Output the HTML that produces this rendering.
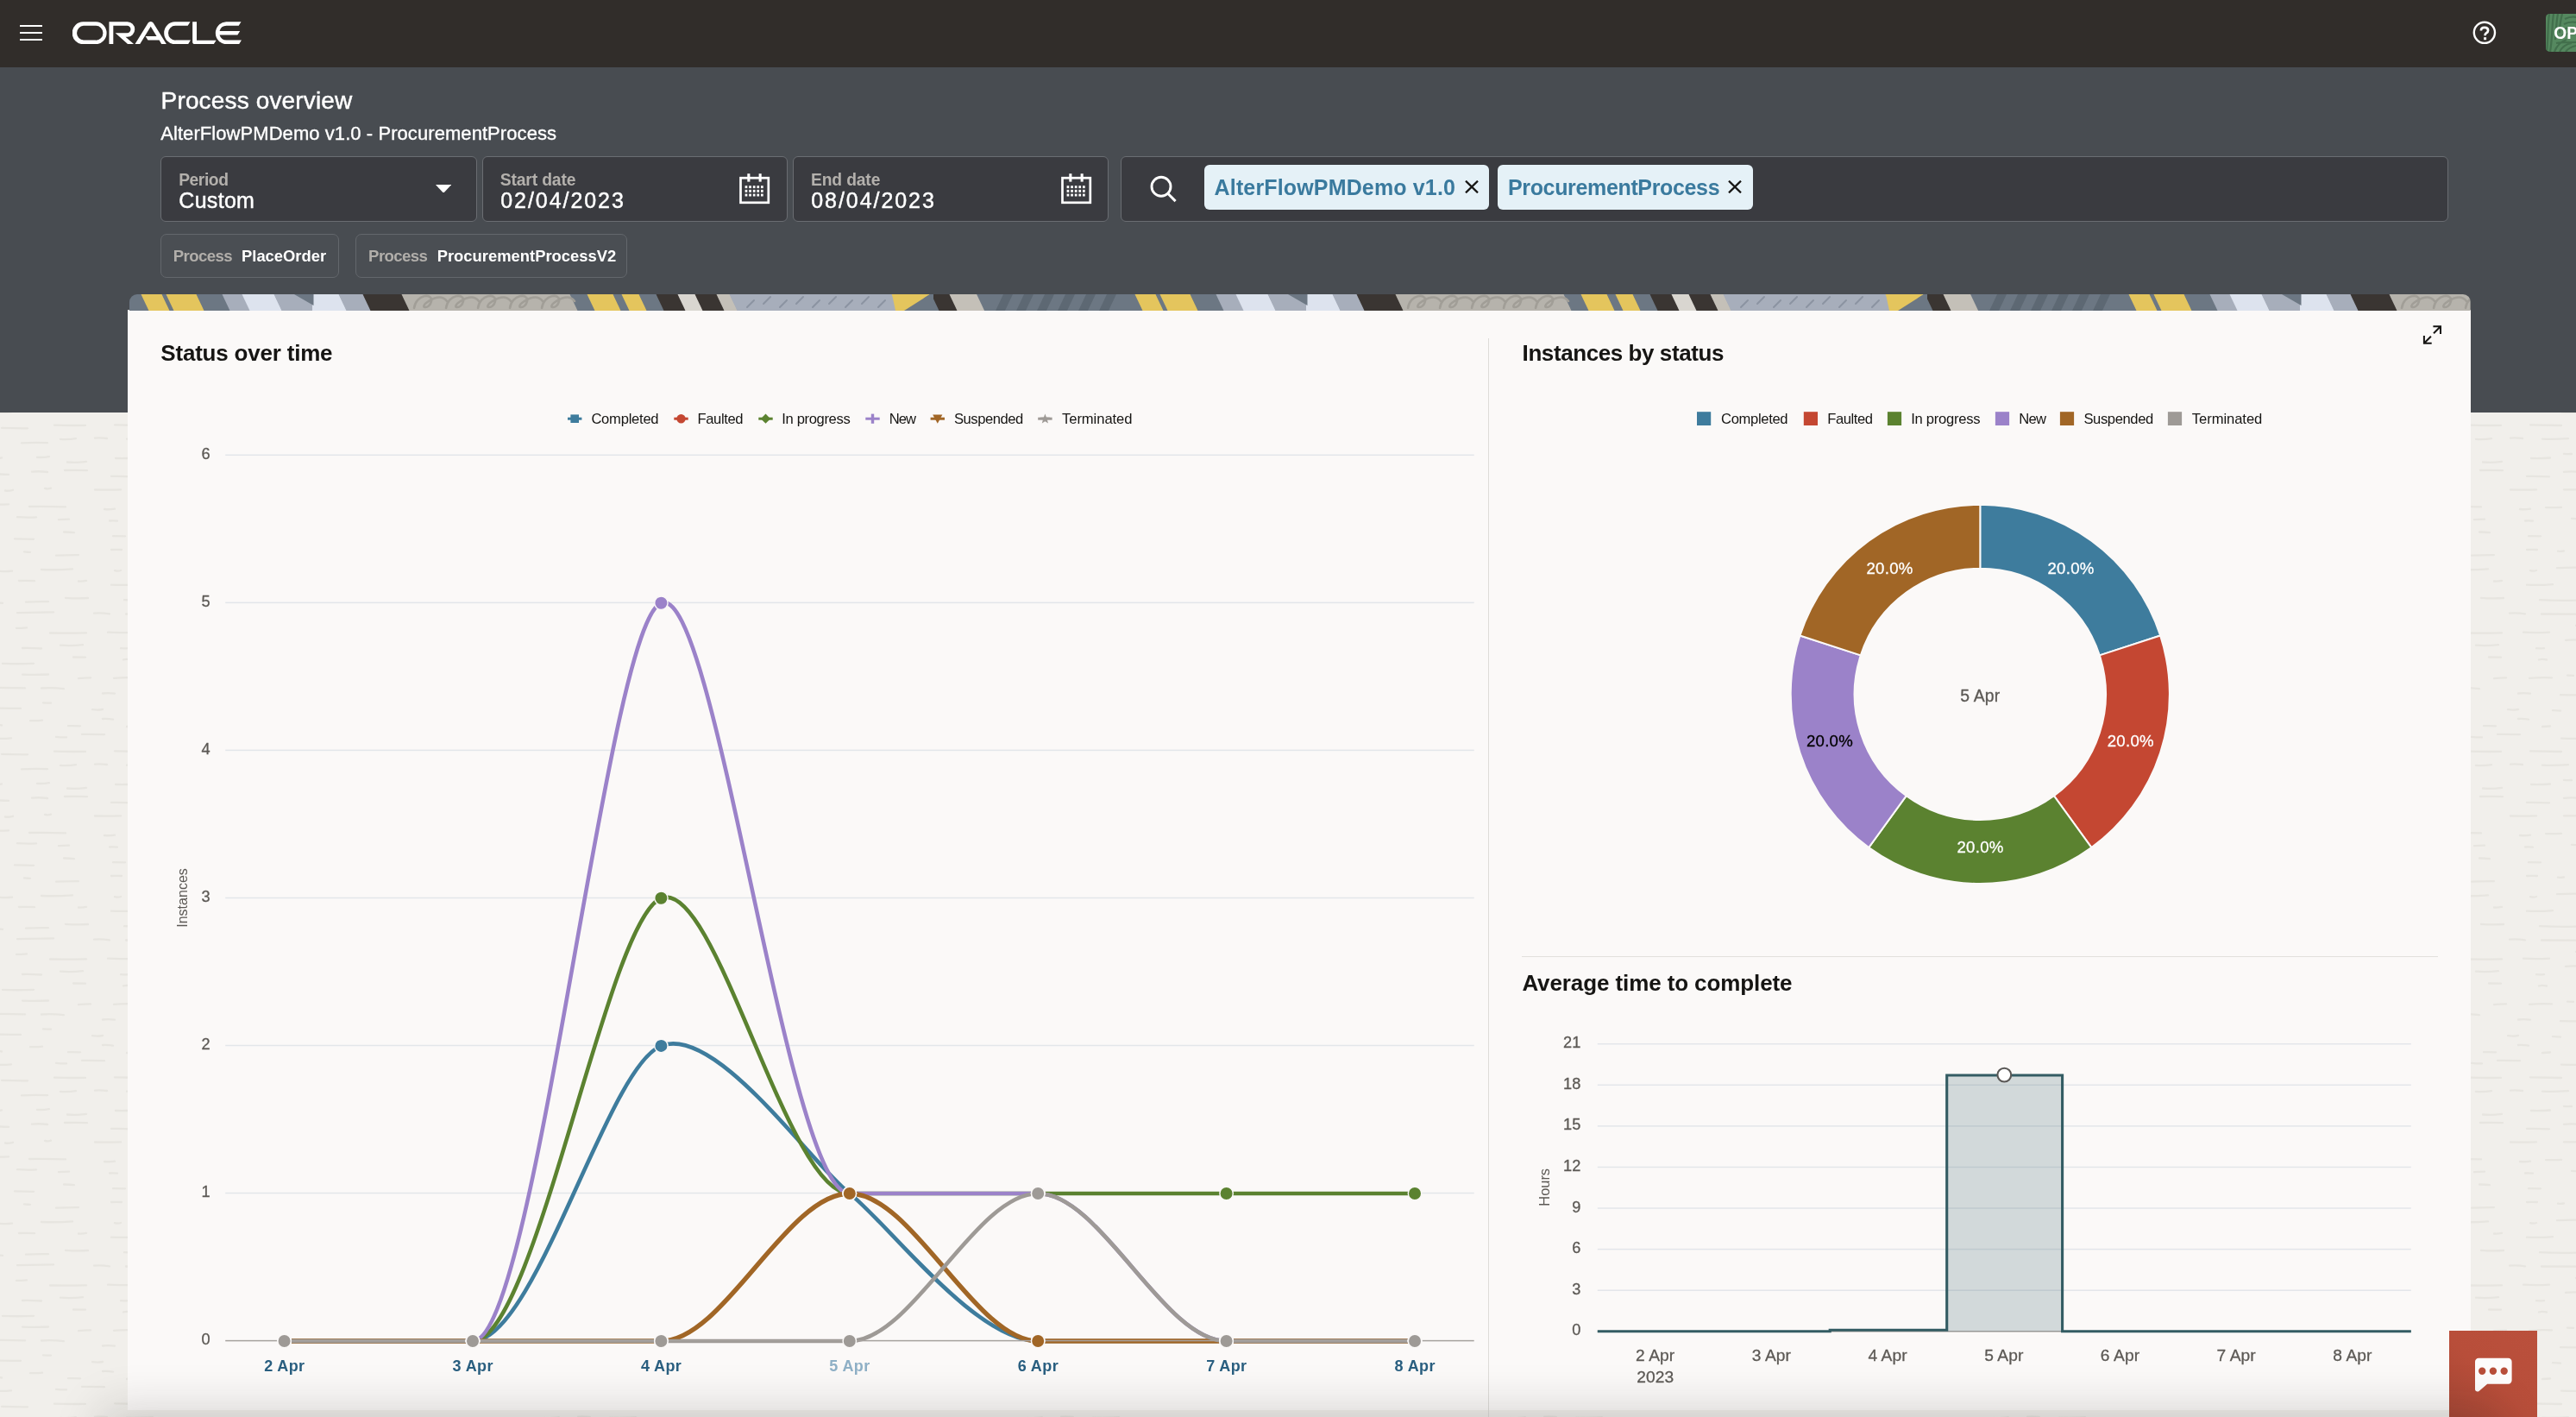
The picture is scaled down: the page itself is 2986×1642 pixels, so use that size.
<!DOCTYPE html><html><head><meta charset="utf-8"><title>Process overview</title><style>html,body{margin:0;padding:0}body{width:2986px;height:1642px;overflow:hidden;position:relative;background:#f1efeb;font-family:"Liberation Sans", sans-serif;}</style></head><body><div style="position:absolute;left:0;top:0;width:2986px;height:1642px;will-change:transform"><svg width="2986" height="1642" style="position:absolute;left:0;top:0"><defs><pattern id="tex" width="560" height="378" patternUnits="userSpaceOnUse"><g stroke="#e7e5e0" stroke-width="2.3" stroke-linecap="round" fill="none"><path d="M3 12.9q18 0.7 36 -0.1"/><path d="M85 5.5q7 0.0 14 0.2"/><path d="M143 8.4q4 -0.9 9 0.1"/><path d="M200 10.0q4 -0.2 7 -0.1"/><path d="M249 10.4q6 0.8 12 -0.7"/><path d="M277 10.1q7 0.7 14 -0.3"/><path d="M327 9.2q7 0.3 14 -0.0"/><path d="M380 10.7q15 -0.2 30 0.1"/><path d="M460 11.3q4 -0.4 9 -0.4"/><path d="M494 9.7q4 -0.9 9 -0.6"/><path d="M528 14.0q4 0.8 9 -0.8"/><path d="M26 25.6q15 0.5 30 -0.1"/><path d="M91 30.1q7 -0.6 14 -0.7"/><path d="M132 29.8q13 -0.9 26 -0.4"/><path d="M176 26.6q4 -0.0 7 0.3"/><path d="M204 23.6q18 0.6 36 -0.6"/><path d="M278 25.8q4 1.2 9 -0.8"/><path d="M334 24.8q21 0.9 42 -0.5"/><path d="M405 28.6q21 -1.0 42 0.8"/><path d="M469 21.6q9 0.3 18 0.5"/><path d="M516 22.5q4 0.2 9 -0.4"/><path d="M-1 40.9q15 0.2 30 0.5"/><path d="M48 41.5q13 -0.8 26 0.7"/><path d="M119 47.5q7 -0.8 14 0.2"/><path d="M168 49.2q13 0.2 26 -0.1"/><path d="M212 45.1q4 -0.6 7 0.4"/><path d="M248 48.6q13 0.2 26 -0.3"/><path d="M294 40.9q4 -0.0 9 0.2"/><path d="M341 42.6q4 1.0 9 -0.5"/><path d="M364 44.0q9 -0.6 18 -0.7"/><path d="M407 45.8q18 -0.9 36 -0.2"/><path d="M491 46.7q11 0.5 22 0.1"/><path d="M532 49.7q4 -0.1 7 -0.2"/><path d="M-18 64.5q21 -0.0 42 0.4"/><path d="M50 58.3q4 0.1 9 0.4"/><path d="M107 66.2q6 1.0 12 -0.2"/><path d="M159 67.1q4 -0.2 9 0.5"/><path d="M215 57.7q21 0.4 42 -0.2"/><path d="M271 58.4q4 0.3 9 0.8"/><path d="M328 61.8q11 0.6 22 0.1"/><path d="M380 58.4q18 0.6 36 -0.8"/><path d="M453 57.7q15 1.1 30 -0.6"/><path d="M527 60.3q15 -1.2 30 -0.3"/><path d="M-10 83.8q6 -0.4 12 0.7"/><path d="M35 79.1q7 0.4 14 -0.5"/><path d="M79 85.2q7 -0.3 14 0.1"/><path d="M119 77.0q6 -0.4 12 0.6"/><path d="M147 86.0q4 -0.5 9 -0.5"/><path d="M187 85.7q9 0.8 18 -0.2"/><path d="M239 83.4q11 0.8 22 0.2"/><path d="M287 78.6q4 0.3 7 0.3"/><path d="M319 78.9q11 0.7 22 -0.8"/><path d="M360 77.6q15 0.6 30 -0.4"/><path d="M434 86.3q4 -0.9 7 -0.6"/><path d="M475 86.0q11 0.4 22 -0.5"/><path d="M529 83.4q6 0.6 12 0.1"/><path d="M-9 99.4q11 1.1 22 0.0"/><path d="M65 97.8q6 0.7 12 0.6"/><path d="M95 94.9q13 -0.1 26 0.2"/><path d="M169 99.6q13 0.4 26 0.0"/><path d="M240 98.6q11 0.4 22 -0.5"/><path d="M304 95.8q4 1.0 9 0.8"/><path d="M364 104.2q18 1.0 36 -0.4"/><path d="M441 97.3q4 -1.0 7 -0.1"/><path d="M483 98.9q9 -1.1 18 0.5"/><path d="M517 95.4q4 -0.4 7 0.5"/><path d="M544 104.5q6 1.0 12 0.0"/><path d="M2 117.9q15 0.5 30 0.4"/><path d="M63 114.7q18 0.5 36 0.2"/><path d="M133 114.3q18 0.4 36 0.7"/><path d="M216 113.8q21 0.8 42 0.7"/><path d="M292 117.0q21 -0.2 42 -0.6"/><path d="M348 111.8q13 1.1 26 0.0"/><path d="M403 112.8q21 -1.0 42 -0.5"/><path d="M494 116.1q15 1.1 30 0.7"/><path d="M25 135.3q15 -0.9 30 -0.1"/><path d="M70 130.9q9 0.7 18 -0.8"/><path d="M110 129.6q7 -0.5 14 0.4"/><path d="M147 130.7q15 0.6 30 -0.6"/><path d="M210 137.4q9 0.5 18 0.6"/><path d="M243 138.6q13 0.3 26 0.1"/><path d="M316 136.5q18 0.1 36 0.6"/><path d="M389 132.1q6 0.6 12 0.5"/><path d="M449 136.1q11 0.9 22 -0.5"/><path d="M515 139.3q7 -0.9 14 -0.4"/><path d="M-7 152.3q4 1.1 9 0.1"/><path d="M43 151.9q7 0.4 14 -0.8"/><path d="M78 157.5q11 1.1 22 -0.6"/><path d="M134 153.0q11 0.4 22 -0.5"/><path d="M172 147.8q4 0.6 9 0.2"/><path d="M230 149.1q15 -0.8 30 -0.5"/><path d="M306 157.7q9 -1.0 18 -0.7"/><path d="M374 148.4q15 -1.0 30 -0.2"/><path d="M434 152.2q11 0.2 22 -0.8"/><path d="M497 149.5q7 -0.1 14 0.4"/><path d="M540 154.2q7 -1.0 14 0.5"/><path d="M-16 171.8q13 -0.7 26 0.1"/><path d="M37 168.6q9 -0.9 18 0.4"/><path d="M75 167.0q13 -0.4 26 0.1"/><path d="M129 173.9q13 -0.2 26 0.4"/><path d="M172 168.8q11 -1.0 22 0.6"/><path d="M246 166.0q21 -0.5 42 0.7"/><path d="M313 172.8q7 0.2 14 0.1"/><path d="M356 172.6q15 0.5 30 0.4"/><path d="M437 166.8q4 -0.9 7 -0.4"/><path d="M475 166.1q18 -0.7 36 -0.2"/><path d="M529 168.5q9 -0.4 18 0.1"/><path d="M6 190.5q4 0.7 9 -0.7"/><path d="M52 187.8q4 1.1 7 -0.2"/><path d="M110 189.5q15 0.2 30 -0.1"/><path d="M172 189.3q9 0.2 18 -0.2"/><path d="M215 189.7q9 -0.5 18 0.3"/><path d="M259 192.0q4 0.2 7 0.2"/><path d="M295 184.1q13 -0.4 26 -0.2"/><path d="M357 184.3q11 1.0 22 -0.1"/><path d="M411 184.0q7 -1.0 14 0.5"/><path d="M474 194.3q6 0.8 12 0.2"/><path d="M504 188.1q21 -0.9 42 0.6"/><path d="M-12 206.4q11 0.4 22 -0.1"/><path d="M34 209.0q21 -0.3 42 0.4"/><path d="M121 212.0q6 0.6 12 -0.4"/><path d="M151 210.1q9 0.3 18 -0.2"/><path d="M193 209.2q21 -0.7 42 -0.4"/><path d="M258 207.0q7 0.4 14 -0.5"/><path d="M312 201.6q4 -0.6 7 -0.8"/><path d="M335 207.5q7 -1.0 14 -0.7"/><path d="M389 204.1q18 1.2 36 -0.0"/><path d="M452 205.3q11 0.6 22 0.5"/><path d="M491 206.4q4 0.8 9 0.5"/><path d="M20 221.2q11 0.8 22 0.2"/><path d="M68 224.2q6 -0.3 12 -0.6"/><path d="M127 225.5q4 -0.2 9 0.1"/><path d="M181 222.8q15 0.7 30 -0.7"/><path d="M233 220.4q21 -0.5 42 0.4"/><path d="M315 229.2q9 -0.7 18 0.3"/><path d="M360 223.0q4 -0.1 9 0.2"/><path d="M417 224.3q9 0.7 18 -0.3"/><path d="M461 230.1q13 0.6 26 0.0"/><path d="M504 219.8q11 0.4 22 0.1"/><path d="M17 246.3q11 0.1 22 0.5"/><path d="M74 238.5q6 -0.1 12 0.6"/><path d="M131 243.2q7 0.1 14 0.1"/><path d="M196 238.2q13 0.1 26 0.5"/><path d="M239 240.5q4 -0.9 9 -0.3"/><path d="M263 238.6q6 0.8 12 -0.1"/><path d="M316 245.9q15 0.1 30 0.4"/><path d="M375 246.4q11 -0.4 22 -0.6"/><path d="M430 245.3q4 1.0 9 -0.1"/><path d="M484 246.9q11 0.7 22 0.5"/><path d="M28 261.3q4 0.5 7 0.5"/><path d="M65 265.6q13 -0.6 26 -0.5"/><path d="M129 259.0q6 -0.3 12 0.0"/><path d="M165 260.7q4 0.6 7 -0.3"/><path d="M192 265.5q6 0.6 12 -0.8"/><path d="M237 258.9q4 -0.7 7 -0.2"/><path d="M280 263.4q21 0.2 42 -0.4"/><path d="M343 259.9q9 1.0 18 0.7"/><path d="M399 260.8q18 -0.6 36 0.6"/><path d="M484 262.8q11 0.7 22 -0.7"/><path d="M-0 283.9q7 0.7 14 -0.2"/><path d="M48 282.0q18 0.7 36 -0.7"/><path d="M133 283.1q4 1.0 7 -0.1"/><path d="M164 280.2q13 -0.8 26 -0.5"/><path d="M216 283.5q9 0.7 18 -0.6"/><path d="M276 276.4q21 0.1 42 -0.6"/><path d="M361 275.7q4 1.0 7 -0.6"/><path d="M387 276.5q11 0.5 22 -0.6"/><path d="M441 274.4q15 0.6 30 0.1"/><path d="M505 282.2q4 -0.2 7 0.7"/><path d="M529 275.8q15 0.1 30 0.0"/><path d="M22 295.0q9 -0.2 18 0.1"/><path d="M91 295.5q4 0.4 9 -0.6"/><path d="M129 299.7q15 0.7 30 -0.6"/><path d="M190 299.3q13 -0.1 26 -0.3"/><path d="M235 300.9q4 0.8 7 0.4"/><path d="M290 294.7q6 -0.3 12 0.1"/><path d="M327 299.8q11 0.1 22 -0.7"/><path d="M370 299.5q13 -0.4 26 0.7"/><path d="M432 296.4q11 -0.3 22 -0.6"/><path d="M491 299.0q6 0.5 12 -0.5"/><path d="M-9 320.4q6 -0.2 12 0.4"/><path d="M30 319.7q13 -0.9 26 -0.5"/><path d="M76 314.8q13 1.0 26 0.2"/><path d="M144 317.2q21 1.2 42 0.5"/><path d="M225 315.3q21 -0.6 42 -0.5"/><path d="M292 310.7q15 -0.3 30 0.0"/><path d="M366 316.2q4 -0.8 9 0.4"/><path d="M424 312.1q18 0.3 36 0.0"/><path d="M495 320.4q7 0.0 14 0.3"/><path d="M-10 334.4q4 -0.7 7 -0.7"/><path d="M20 332.1q21 -0.4 42 -0.7"/><path d="M109 332.6q9 -0.9 18 0.8"/><path d="M146 333.5q21 0.1 42 0.1"/><path d="M213 334.1q11 -0.9 22 0.5"/><path d="M259 330.1q11 0.2 22 0.5"/><path d="M303 336.4q18 -0.1 36 -0.2"/><path d="M382 330.9q6 0.4 12 0.4"/><path d="M423 334.5q21 0.6 42 -0.5"/><path d="M494 329.1q4 -0.3 7 0.1"/><path d="M522 328.9q18 -0.6 36 0.7"/><path d="M19 349.9q6 -0.0 12 -0.6"/><path d="M58 355.5q21 0.2 42 -0.1"/><path d="M125 354.7q15 0.9 30 -0.1"/><path d="M186 346.8q21 1.1 42 -0.3"/><path d="M261 355.4q13 -0.4 26 -0.7"/><path d="M329 353.6q13 0.2 26 0.4"/><path d="M380 355.1q21 -0.6 42 0.6"/><path d="M446 356.2q13 -0.1 26 -0.6"/><path d="M520 348.9q18 -0.3 36 -0.4"/><path d="M26 373.0q11 -0.2 22 0.5"/><path d="M70 369.7q13 1.0 26 -0.6"/><path d="M140 373.2q4 0.2 9 -0.1"/><path d="M174 363.8q9 -0.8 18 -0.1"/><path d="M223 367.9q18 -0.3 36 0.1"/><path d="M275 368.5q4 -0.4 7 -0.3"/><path d="M302 373.2q15 -0.7 30 0.6"/><path d="M372 365.7q4 0.8 7 -0.2"/><path d="M411 370.5q6 0.5 12 0.1"/><path d="M457 365.6q7 0.9 14 -0.7"/><path d="M489 374.1q11 -0.5 22 -0.1"/></g></pattern></defs><rect x="0" y="478" width="2986" height="1164" fill="url(#tex)"/></svg>
<div style="position:absolute;left:0px;top:0px;width:2986px;height:77.6px;background:#312d2a;"></div>
<div style="position:absolute;left:0px;top:77.6px;width:2986px;height:400.4px;background:#484c51;"></div>
<div style="position:absolute;left:22.7px;top:28.95px;width:26.6px;height:2.5px;background:#fff;"></div>
<div style="position:absolute;left:22.7px;top:36.75px;width:26.6px;height:2.5px;background:#fff;"></div>
<div style="position:absolute;left:22.7px;top:44.75px;width:26.6px;height:2.5px;background:#fff;"></div>
<svg viewBox="0 0 231 30" preserveAspectRatio="none" style="position:absolute;left:83.9px;top:24.8px;width:196.2px;height:26.2px"><path fill="#fff" d="M99.61,19.52h15.24l-8.05-13L92,30H85.27l18-28.17a4.29,4.29,0,0,1,7-.05L128.32,30h-6.73l-3.17-5.25H103l-3.36-5.23m69.93,5.23V0.28h-5.72V27.16a2.76,2.76,0,0,0,.85,2,2.89,2.89,0,0,0,2.08.87h26l3.39-5.25H169.54M75,20.38A10,10,0,0,0,75,.28H50V30h5.71V5.54H74.65a4.81,4.81,0,0,1,0,9.62H58.54L75.6,30h8.29L72.43,20.38H75M14.88,30H32.15a14.86,14.86,0,0,0,0-29.71H14.88a14.86,14.86,0,1,0,0,29.71m16.88-5.23H15.26a9.62,9.62,0,0,1,0-19.23h16.5a9.62,9.62,0,1,1,0,19.23M140.25,30h17.63l3.34-5.23H140.64a9.62,9.62,0,1,1,0-19.23h16.75l3.38-5.25H140.25a14.86,14.86,0,1,0,0,29.71m69.87-5.23a9.62,9.62,0,0,1-9.26-7h24.42l3.36-5.24H200.86a9.61,9.61,0,0,1,9.26-7h16.76l3.35-5.25h-20.5a14.86,14.86,0,0,0,0,29.71h17.63l3.35-5.23h-20.6"/></svg>
<svg style="position:absolute;left:2864px;top:22px;width:32px;height:32px" viewBox="0 0 32 32"><circle cx="15.9" cy="15.8" r="12.1" fill="none" stroke="#fff" stroke-width="2.4"/><path d="M11.9 13.6c0-2.4 1.8-3.7 4.1-3.7 2.4 0 4.1 1.3 4.1 3.3 0 1.6-.9 2.4-2.1 3.2-1 .7-1.4 1.2-1.4 2.3v.6" fill="none" stroke="#fff" stroke-width="2.7"/><rect x="15.1" y="21.2" width="3" height="3" fill="#fff"/></svg>
<svg style="position:absolute;left:2951px;top:15.9px;width:35px;height:44px" viewBox="0 0 35 44"><defs><clipPath id="opc"><rect x="0" y="0" width="60" height="43.9" rx="4.5"/></clipPath></defs><g clip-path="url(#opc)"><rect width="60" height="44" fill="#55885f"/><g stroke="#426f4c" stroke-width="2.2" fill="none"><path d="M4 0C2 14 3 30 1 44M9 0C7 12 8 26 5 44M14 0C12 10 12 20 11 30M19 0c-2 8-3 14-3 22"/><path d="M22 6c6-3 10-3 14-2M21 12c6-3 10-3 14-2M21 18c6-3 10-3 14-2M19 25c6-3 12-3 16-2"/><path d="M10 44c3-8 8-12 14-14M16 44c3-6 8-9 14-10M23 44c3-4 7-6 12-7M12 34c4-1 8-1 23-1"/></g></g><text transform="translate(9.3 28.6) scale(0.944 1)" font-size="20.4" font-weight="700" fill="#fff">OP</text></svg>
<div style="position:absolute;left:186.6px;top:103.20px;font-size:28px;line-height:28px;font-weight:400;color:#fff;letter-spacing:0.15px;white-space:nowrap;-webkit-text-stroke:0.45px #fff;">Process overview</div>
<div style="position:absolute;left:186.2px;top:144.18px;font-size:22px;line-height:22px;font-weight:400;color:#fff;letter-spacing:0.07px;white-space:nowrap;-webkit-text-stroke:0.35px #fff;">AlterFlowPMDemo v1.0 - ProcurementProcess</div>
<div style="position:absolute;left:186.2px;top:181.3px;width:366.6px;height:75.9px;box-sizing:border-box;background:#3a3b40;border:1.2px solid #6a6d72;border-radius:6px;"></div>
<div style="position:absolute;left:559.1px;top:181.3px;width:353.6px;height:75.9px;box-sizing:border-box;background:#3a3b40;border:1.2px solid #6a6d72;border-radius:6px;"></div>
<div style="position:absolute;left:918.8px;top:181.3px;width:366.4px;height:75.9px;box-sizing:border-box;background:#3a3b40;border:1.2px solid #6a6d72;border-radius:6px;"></div>
<div style="position:absolute;left:1299.3px;top:181.3px;width:1539.2px;height:75.9px;box-sizing:border-box;background:#3a3b40;border:1.2px solid #6a6d72;border-radius:6px;"></div>
<div style="position:absolute;left:207.2px;top:199.26px;font-size:19.3px;line-height:19.3px;font-weight:700;color:#b3b0ac;letter-spacing:-0.45px;white-space:nowrap;">Period</div>
<div style="position:absolute;left:207.3px;top:220.44px;font-size:25px;line-height:25px;font-weight:400;color:#fff;letter-spacing:0.3px;white-space:nowrap;-webkit-text-stroke:0.45px #fff;">Custom</div>
<div style="position:absolute;left:579.8px;top:199.26px;font-size:19.3px;line-height:19.3px;font-weight:700;color:#b3b0ac;letter-spacing:-0.15px;white-space:nowrap;">Start date</div>
<div style="position:absolute;left:580.2px;top:220.34px;font-size:25px;line-height:25px;font-weight:400;color:#fff;letter-spacing:1.95px;white-space:nowrap;-webkit-text-stroke:0.45px #fff;">02/04/2023</div>
<div style="position:absolute;left:940.0px;top:199.26px;font-size:19.3px;line-height:19.3px;font-weight:700;color:#b3b0ac;letter-spacing:-0.15px;white-space:nowrap;">End date</div>
<div style="position:absolute;left:940.2px;top:220.34px;font-size:25px;line-height:25px;font-weight:400;color:#fff;letter-spacing:1.95px;white-space:nowrap;-webkit-text-stroke:0.45px #fff;">08/04/2023</div>
<svg style="position:absolute;left:505.3px;top:213.6px;width:18.2px;height:9.8px" viewBox="0 0 18.2 9.8"><path d="M0 0h18.2L9.1 9.8z" fill="#fff"/></svg>
<svg style="position:absolute;left:856.8px;top:200.8px;width:36px;height:36px" viewBox="0 0 36 36"><rect x="1.5" y="5.2" width="32.3" height="28.6" fill="none" stroke="#fff" stroke-width="2.7"/><rect x="9.3" y="0.2" width="3.1" height="9.4" fill="#fff"/><rect x="22.6" y="0.2" width="3.1" height="9.4" fill="#fff"/><g fill="#fff"><rect x="6.6" y="14.2" width="2.7" height="2.9"/><rect x="11.2" y="14.2" width="2.7" height="2.9"/><rect x="15.8" y="14.2" width="2.7" height="2.9"/><rect x="20.4" y="14.2" width="2.7" height="2.9"/><rect x="25.0" y="14.2" width="2.7" height="2.9"/><rect x="6.6" y="18.9" width="2.7" height="2.9"/><rect x="11.2" y="18.9" width="2.7" height="2.9"/><rect x="15.8" y="18.9" width="2.7" height="2.9"/><rect x="20.4" y="18.9" width="2.7" height="2.9"/><rect x="25.0" y="18.9" width="2.7" height="2.9"/><rect x="6.6" y="23.6" width="2.7" height="2.9"/><rect x="11.2" y="23.6" width="2.7" height="2.9"/><rect x="15.8" y="23.6" width="2.7" height="2.9"/><rect x="20.4" y="23.6" width="2.7" height="2.9"/><rect x="25.0" y="23.6" width="2.7" height="2.9"/></g></svg>
<svg style="position:absolute;left:1229.8px;top:200.8px;width:36px;height:36px" viewBox="0 0 36 36"><rect x="1.5" y="5.2" width="32.3" height="28.6" fill="none" stroke="#fff" stroke-width="2.7"/><rect x="9.3" y="0.2" width="3.1" height="9.4" fill="#fff"/><rect x="22.6" y="0.2" width="3.1" height="9.4" fill="#fff"/><g fill="#fff"><rect x="6.6" y="14.2" width="2.7" height="2.9"/><rect x="11.2" y="14.2" width="2.7" height="2.9"/><rect x="15.8" y="14.2" width="2.7" height="2.9"/><rect x="20.4" y="14.2" width="2.7" height="2.9"/><rect x="25.0" y="14.2" width="2.7" height="2.9"/><rect x="6.6" y="18.9" width="2.7" height="2.9"/><rect x="11.2" y="18.9" width="2.7" height="2.9"/><rect x="15.8" y="18.9" width="2.7" height="2.9"/><rect x="20.4" y="18.9" width="2.7" height="2.9"/><rect x="25.0" y="18.9" width="2.7" height="2.9"/><rect x="6.6" y="23.6" width="2.7" height="2.9"/><rect x="11.2" y="23.6" width="2.7" height="2.9"/><rect x="15.8" y="23.6" width="2.7" height="2.9"/><rect x="20.4" y="23.6" width="2.7" height="2.9"/><rect x="25.0" y="23.6" width="2.7" height="2.9"/></g></svg>
<svg style="position:absolute;left:1330px;top:200px;width:36px;height:36px" viewBox="0 0 36 36"><circle cx="16" cy="16.3" r="11" fill="none" stroke="#fff" stroke-width="2.9"/><path d="M24 24.5l8.6 8.6" stroke="#fff" stroke-width="3" fill="none"/></svg>
<div style="position:absolute;left:1396.2px;top:191.2px;width:329.6px;height:51.7px;background:#e5f1f7;border-radius:6px;"></div>
<div style="position:absolute;left:1407.6px;top:205.44px;font-size:25px;line-height:25px;font-weight:700;color:#3a7a9e;letter-spacing:0.15px;white-space:nowrap;">AlterFlowPMDemo v1.0</div>
<svg style="position:absolute;left:1697.8px;top:209.3px;width:16px;height:15px" viewBox="0 0 16 15"><path d="M1 0.6l14 13.8M15 0.6L1 14.4" stroke="#161513" stroke-width="2.2" fill="none"/></svg>
<div style="position:absolute;left:1736.1px;top:191.2px;width:296.0px;height:51.7px;background:#e5f1f7;border-radius:6px;"></div>
<div style="position:absolute;left:1748.0px;top:205.44px;font-size:25px;line-height:25px;font-weight:700;color:#3a7a9e;letter-spacing:-0.35px;white-space:nowrap;">ProcurementProcess</div>
<svg style="position:absolute;left:2003.2px;top:209.3px;width:16px;height:15px" viewBox="0 0 16 15"><path d="M1 0.6l14 13.8M15 0.6L1 14.4" stroke="#161513" stroke-width="2.2" fill="none"/></svg>
<div style="position:absolute;left:186.2px;top:271.1px;width:206.6px;height:50.9px;box-sizing:border-box;border:1.2px solid #63676c;border-radius:7px;background:#4a4e53;"></div>
<div style="position:absolute;left:200.79999999999998px;top:288.26px;font-size:18.6px;line-height:18.6px;font-weight:700;color:#b1aeaa;letter-spacing:-0.6px;white-space:nowrap;">Process</div>
<div style="position:absolute;left:280.0px;top:288.42px;font-size:18.4px;line-height:18.4px;font-weight:700;color:#fff;letter-spacing:0.0px;white-space:nowrap;">PlaceOrder</div>
<div style="position:absolute;left:412.3px;top:271.1px;width:315.0px;height:50.9px;box-sizing:border-box;border:1.2px solid #63676c;border-radius:7px;background:#4a4e53;"></div>
<div style="position:absolute;left:427.09999999999997px;top:288.26px;font-size:18.6px;line-height:18.6px;font-weight:700;color:#b1aeaa;letter-spacing:-0.6px;white-space:nowrap;">Process</div>
<div style="position:absolute;left:506.7px;top:288.42px;font-size:18.4px;line-height:18.4px;font-weight:700;color:#fff;letter-spacing:0.0px;white-space:nowrap;">ProcurementProcessV2</div>
<div style="position:absolute;left:148.0px;top:359.4px;width:2716.0px;height:1274.6px;background:#fbf9f8;"></div>
<svg width="2713.6" height="18.6" style="position:absolute;left:150.4px;top:341px;border-radius:9px 9px 0 0;overflow:hidden"><defs><pattern id="strip" width="1152" height="19" patternUnits="userSpaceOnUse"><rect x="0" y="0" width="1152" height="19" fill="#6c7783"/><path d="M13.5 0H38.1L47.1 19H22.5z" fill="#e4c55d"/><path d="M37.5 0H43.1L52.1 19H46.5z" fill="#6c7783"/><path d="M42.5 0H78.1L87.1 19H51.5z" fill="#e4c55d"/><path d="M77.5 0H108.1L117.1 19H86.5z" fill="#6c7783"/><path d="M107.5 0H131.1L140.1 19H116.5z" fill="#a7aebb"/><path d="M130.5 0H168.1L177.1 19H139.5z" fill="#dde3ee"/><path d="M167.5 0H210.1L219.1 19H176.5z" fill="#a7aebb"/><path d="M209.5 0H243.1L252.1 19H218.5z" fill="#dde3ee"/><path d="M242.5 0H271.1L280.1 19H251.5z" fill="#a7aebb"/><path d="M270.5 0H316.1L325.1 19H279.5z" fill="#3a3532"/><path d="M315.5 0H511.1L520.1 19H324.5z" fill="#b6b3ac"/><path d="M510.5 0H531.1L540.1 19H519.5z" fill="#6c7783"/><path d="M530.5 0H561.1L570.1 19H539.5z" fill="#e4c55d"/><path d="M560.5 0H571.1L580.1 19H569.5z" fill="#6c7783"/><path d="M570.5 0H591.1L600.1 19H579.5z" fill="#e4c55d"/><path d="M590.5 0H611.1L620.1 19H599.5z" fill="#6c7783"/><path d="M610.5 0H636.1L645.1 19H619.5z" fill="#3a3532"/><path d="M635.5 0H656.1L665.1 19H644.5z" fill="#d9d6d0"/><path d="M655.5 0H681.1L690.1 19H664.5z" fill="#3a3532"/><path d="M680.5 0H696.1L705.1 19H689.5z" fill="#c4c0b8"/><path d="M695.5 0H884.1L893.1 19H704.5z" fill="#a7aebb"/><path d="M883.5 0H919.1L928.1 19H892.5z" fill="#e4c55d"/><path d="M918.5 0H930.1L939.1 19H927.5z" fill="#6c7783"/><path d="M929.5 0H951.1L960.1 19H938.5z" fill="#3a3532"/><path d="M950.5 0H982.1L991.1 19H959.5z" fill="#c4c0b8"/><rect x="212" y="0" width="9" height="19" fill="#dde3ee"/><path d="M191 0h22.5v13z" fill="#6c7783"/><path d="M884 0h44l-30 19h-10z" fill="#e4c55d"/><path d="M928 0l-30 19h34V0z" fill="#6c7783"/><path d="M330 16c2-16 22-18 20-8s-14 8-6 2s18-10 24-2M367 16c2-16 22-18 20-8s-14 8-6 2s18-10 24-2M404 16c2-16 22-18 20-8s-14 8-6 2s18-10 24-2M441 16c2-16 22-18 20-8s-14 8-6 2s18-10 24-2M478 16c2-16 22-18 20-8s-14 8-6 2s18-10 24-2" stroke="#a19e97" stroke-width="2.6" fill="none" stroke-linecap="round"/><path d="M716 15l8 -8M735 11l8 -8M754 15l8 -8M773 11l8 -8M792 15l8 -8M811 11l8 -8M830 15l8 -8M849 11l8 -8M868 15l8 -8" stroke="#8b93a1" stroke-width="2" fill="none" stroke-linecap="round"/><path d="M1004 19l9 -19h11l-9 19zM1028 19l9 -19h11l-9 19zM1052 19l9 -19h11l-9 19zM1076 19l9 -19h11l-9 19zM1100 19l9 -19h11l-9 19zM1124 19l9 -19h11l-9 19z" fill="#5d6873"/></pattern></defs><rect width="2713.6" height="19" fill="url(#strip)"/></svg>
<div style="position:absolute;left:186.3px;top:395.99px;font-size:26px;line-height:26px;font-weight:700;color:#161513;letter-spacing:-0.2px;white-space:nowrap;">Status over time</div>
<div style="position:absolute;left:1764.6px;top:395.99px;font-size:26px;line-height:26px;font-weight:700;color:#161513;letter-spacing:-0.42px;white-space:nowrap;">Instances by status</div>
<div style="position:absolute;left:1764.4px;top:1125.79px;font-size:26px;line-height:26px;font-weight:700;color:#161513;letter-spacing:-0.1px;white-space:nowrap;">Average time to complete</div>
<div style="position:absolute;left:1724.8px;top:392px;width:1.5px;height:1250px;background:#dedcd9;"></div>
<div style="position:absolute;left:1764.3px;top:1107.5px;width:1061.6px;height:1.5px;background:#e2e0dd;"></div>
<svg style="position:absolute;left:2806px;top:374px;width:28px;height:28px" viewBox="0 0 28 28"><g stroke="#161513" stroke-width="2" fill="none"><path d="M14.4 4.3H23V12.9M23 4.3L15 12.3"/><path d="M3.9 15V23.8H12.7M3.9 23.8L11.9 15.8"/></g></svg>
<svg width="2986" height="1642" style="position:absolute;left:0;top:0;font-family:'Liberation Sans', sans-serif"><rect x="261.2" y="1381.80" width="1447.5" height="1.5" fill="#e3e6ea"/><rect x="261.2" y="1210.75" width="1447.5" height="1.5" fill="#e3e6ea"/><rect x="261.2" y="1039.70" width="1447.5" height="1.5" fill="#e3e6ea"/><rect x="261.2" y="868.65" width="1447.5" height="1.5" fill="#e3e6ea"/><rect x="261.2" y="697.60" width="1447.5" height="1.5" fill="#e3e6ea"/><rect x="261.2" y="526.55" width="1447.5" height="1.5" fill="#e3e6ea"/><text x="243.7" y="1558.3" font-size="18.2" font-weight="400" fill="#5c5955" stroke="#5c5955" stroke-width="0.3" letter-spacing="0" text-anchor="end" >0</text><text x="243.7" y="1387.25" font-size="18.2" font-weight="400" fill="#5c5955" stroke="#5c5955" stroke-width="0.3" letter-spacing="0" text-anchor="end" >1</text><text x="243.7" y="1216.2" font-size="18.2" font-weight="400" fill="#5c5955" stroke="#5c5955" stroke-width="0.3" letter-spacing="0" text-anchor="end" >2</text><text x="243.7" y="1045.1499999999999" font-size="18.2" font-weight="400" fill="#5c5955" stroke="#5c5955" stroke-width="0.3" letter-spacing="0" text-anchor="end" >3</text><text x="243.7" y="874.0999999999999" font-size="18.2" font-weight="400" fill="#5c5955" stroke="#5c5955" stroke-width="0.3" letter-spacing="0" text-anchor="end" >4</text><text x="243.7" y="703.05" font-size="18.2" font-weight="400" fill="#5c5955" stroke="#5c5955" stroke-width="0.3" letter-spacing="0" text-anchor="end" >5</text><text x="243.7" y="531.9999999999998" font-size="18.2" font-weight="400" fill="#5c5955" stroke="#5c5955" stroke-width="0.3" letter-spacing="0" text-anchor="end" >6</text><text transform="translate(217.3 1040.5) rotate(-90)" font-size="16" fill="#5c5955" text-anchor="middle" letter-spacing="0.02">Instances</text><text x="329.8" y="1588.5" font-size="18" font-weight="700" fill="#2a5f80"  letter-spacing="0.4" text-anchor="middle" >2 Apr</text><text x="548.2" y="1588.5" font-size="18" font-weight="700" fill="#2a5f80"  letter-spacing="0.4" text-anchor="middle" >3 Apr</text><text x="766.6000000000001" y="1588.5" font-size="18" font-weight="700" fill="#2a5f80"  letter-spacing="0.4" text-anchor="middle" >4 Apr</text><text x="985.0000000000001" y="1588.5" font-size="18" font-weight="700" fill="#8fb0c6"  letter-spacing="0.4" text-anchor="middle" >5 Apr</text><text x="1203.4" y="1588.5" font-size="18" font-weight="700" fill="#2a5f80"  letter-spacing="0.4" text-anchor="middle" >6 Apr</text><text x="1421.8" y="1588.5" font-size="18" font-weight="700" fill="#2a5f80"  letter-spacing="0.4" text-anchor="middle" >7 Apr</text><text x="1640.2" y="1588.5" font-size="18" font-weight="700" fill="#2a5f80"  letter-spacing="0.4" text-anchor="middle" >8 Apr</text><path d="M329.6 1554.0C366.0 1554.0 475.2 1554.0 548.0 1554.0C620.8 1554.0 703.3 1236.6 766.4 1211.9C829.5 1187.2 939.7 1347.6 984.8 1383.0C1029.9 1418.3 1130.4 1554.0 1203.2 1554.0C1276.0 1554.0 1348.8 1554.0 1421.6 1554.0C1494.4 1554.0 1603.6 1554.0 1640.0 1554.0" fill="none" stroke="#3e7c9d" stroke-width="4.6" stroke-linejoin="round"/><path d="M329.6 1554.0C366.0 1554.0 475.2 1554.0 548.0 1554.0C620.8 1554.0 703.3 1065.6 766.4 1040.8C829.5 1016.1 912.0 1383.0 984.8 1383.0C1057.6 1383.0 1130.4 1383.0 1203.2 1383.0C1276.0 1383.0 1348.8 1383.0 1421.6 1383.0C1494.4 1383.0 1603.6 1383.0 1640.0 1383.0" fill="none" stroke="#5b8230" stroke-width="4.6" stroke-linejoin="round"/><path d="M329.6 1554.0C366.0 1554.0 475.2 1554.0 548.0 1554.0C620.8 1554.0 703.3 723.5 766.4 698.7C829.5 674.0 912.0 1383.0 984.8 1383.0C1057.6 1383.0 1130.4 1383.0 1203.2 1383.0C1276.0 1383.0 1348.8 1554.0 1421.6 1554.0C1494.4 1554.0 1603.6 1554.0 1640.0 1554.0" fill="none" stroke="#9b82c9" stroke-width="4.6" stroke-linejoin="round"/><path d="M329.6 1554.0C366.0 1554.0 475.2 1554.0 548.0 1554.0C620.8 1554.0 693.6 1554.0 766.4 1554.0C839.2 1554.0 912.0 1383.0 984.8 1383.0C1057.6 1383.0 1130.4 1554.0 1203.2 1554.0C1276.0 1554.0 1348.8 1554.0 1421.6 1554.0C1494.4 1554.0 1603.6 1554.0 1640.0 1554.0" fill="none" stroke="#a16626" stroke-width="5.4" stroke-linejoin="round"/><path d="M329.6 1554.0C366.0 1554.0 475.2 1554.0 548.0 1554.0C620.8 1554.0 693.6 1554.0 766.4 1554.0C839.2 1554.0 912.0 1554.0 984.8 1554.0C1057.6 1554.0 1130.4 1383.0 1203.2 1383.0C1276.0 1383.0 1348.8 1554.0 1421.6 1554.0C1494.4 1554.0 1603.6 1554.0 1640.0 1554.0" fill="none" stroke="#9e9a96" stroke-width="4.6" stroke-linejoin="round"/><rect x="261.2" y="1552.85" width="1447.5" height="1.5" fill="#a6a29e"/><circle cx="329.6" cy="1554.0" r="7.7" fill="#3e7c9d" stroke="#fbf9f8" stroke-width="1.4"/><circle cx="548.0" cy="1554.0" r="7.7" fill="#3e7c9d" stroke="#fbf9f8" stroke-width="1.4"/><circle cx="766.4" cy="1211.9" r="7.7" fill="#3e7c9d" stroke="#fbf9f8" stroke-width="1.4"/><circle cx="984.8" cy="1383.0" r="7.7" fill="#3e7c9d" stroke="#fbf9f8" stroke-width="1.4"/><circle cx="1203.2" cy="1554.0" r="7.7" fill="#3e7c9d" stroke="#fbf9f8" stroke-width="1.4"/><circle cx="1421.6" cy="1554.0" r="7.7" fill="#3e7c9d" stroke="#fbf9f8" stroke-width="1.4"/><circle cx="1640.0" cy="1554.0" r="7.7" fill="#3e7c9d" stroke="#fbf9f8" stroke-width="1.4"/><circle cx="329.6" cy="1554.0" r="7.7" fill="#5b8230" stroke="#fbf9f8" stroke-width="1.4"/><circle cx="548.0" cy="1554.0" r="7.7" fill="#5b8230" stroke="#fbf9f8" stroke-width="1.4"/><circle cx="766.4" cy="1040.8" r="7.7" fill="#5b8230" stroke="#fbf9f8" stroke-width="1.4"/><circle cx="984.8" cy="1383.0" r="7.7" fill="#5b8230" stroke="#fbf9f8" stroke-width="1.4"/><circle cx="1203.2" cy="1383.0" r="7.7" fill="#5b8230" stroke="#fbf9f8" stroke-width="1.4"/><circle cx="1421.6" cy="1383.0" r="7.7" fill="#5b8230" stroke="#fbf9f8" stroke-width="1.4"/><circle cx="1640.0" cy="1383.0" r="7.7" fill="#5b8230" stroke="#fbf9f8" stroke-width="1.4"/><circle cx="329.6" cy="1554.0" r="7.7" fill="#9b82c9" stroke="#fbf9f8" stroke-width="1.4"/><circle cx="548.0" cy="1554.0" r="7.7" fill="#9b82c9" stroke="#fbf9f8" stroke-width="1.4"/><circle cx="766.4" cy="698.7" r="7.7" fill="#9b82c9" stroke="#fbf9f8" stroke-width="1.4"/><circle cx="984.8" cy="1383.0" r="7.7" fill="#9b82c9" stroke="#fbf9f8" stroke-width="1.4"/><circle cx="1203.2" cy="1383.0" r="7.7" fill="#9b82c9" stroke="#fbf9f8" stroke-width="1.4"/><circle cx="1421.6" cy="1554.0" r="7.7" fill="#9b82c9" stroke="#fbf9f8" stroke-width="1.4"/><circle cx="1640.0" cy="1554.0" r="7.7" fill="#9b82c9" stroke="#fbf9f8" stroke-width="1.4"/><circle cx="329.6" cy="1554.0" r="7.7" fill="#a16626" stroke="#fbf9f8" stroke-width="1.4"/><circle cx="548.0" cy="1554.0" r="7.7" fill="#a16626" stroke="#fbf9f8" stroke-width="1.4"/><circle cx="766.4" cy="1554.0" r="7.7" fill="#a16626" stroke="#fbf9f8" stroke-width="1.4"/><circle cx="984.8" cy="1383.0" r="7.7" fill="#a16626" stroke="#fbf9f8" stroke-width="1.4"/><circle cx="1203.2" cy="1554.0" r="7.7" fill="#a16626" stroke="#fbf9f8" stroke-width="1.4"/><circle cx="1421.6" cy="1554.0" r="7.7" fill="#a16626" stroke="#fbf9f8" stroke-width="1.4"/><circle cx="1640.0" cy="1554.0" r="7.7" fill="#a16626" stroke="#fbf9f8" stroke-width="1.4"/><circle cx="329.6" cy="1554.0" r="7.7" fill="#9e9a96" stroke="#fbf9f8" stroke-width="1.4"/><circle cx="548.0" cy="1554.0" r="7.7" fill="#9e9a96" stroke="#fbf9f8" stroke-width="1.4"/><circle cx="766.4" cy="1554.0" r="7.7" fill="#9e9a96" stroke="#fbf9f8" stroke-width="1.4"/><circle cx="984.8" cy="1554.0" r="7.7" fill="#9e9a96" stroke="#fbf9f8" stroke-width="1.4"/><circle cx="1203.2" cy="1383.0" r="7.7" fill="#9e9a96" stroke="#fbf9f8" stroke-width="1.4"/><circle cx="1421.6" cy="1554.0" r="7.7" fill="#9e9a96" stroke="#fbf9f8" stroke-width="1.4"/><circle cx="1640.0" cy="1554.0" r="7.7" fill="#9e9a96" stroke="#fbf9f8" stroke-width="1.4"/><rect x="658.0" y="483.7" width="16.4" height="3" fill="#3e7c9d"/><rect x="661.4000000000001" y="480.4" width="9.6" height="9.6" fill="#3e7c9d"/><text x="685.4" y="491.2" font-size="16.6" fill="#161513" textLength="78.2" lengthAdjust="spacing">Completed</text><rect x="781.3" y="483.7" width="16.4" height="3" fill="#c44732"/><circle cx="789.5" cy="485.2" r="5.2" fill="#c44732"/><text x="808.5" y="491.2" font-size="16.6" fill="#161513" textLength="53.0" lengthAdjust="spacing">Faulted</text><rect x="879.3" y="483.7" width="16.4" height="3" fill="#5b8230"/><path d="M887.5 479.59999999999997l5.6 5.6-5.6 5.6-5.6-5.6z" fill="#5b8230"/><text x="906.3" y="491.2" font-size="16.6" fill="#161513" textLength="79.4" lengthAdjust="spacing">In progress</text><rect x="1003.3" y="483.7" width="16.4" height="3" fill="#9b82c9"/><path d="M1009.8 479.59999999999997h3.4v11.2h-3.4z" fill="#9b82c9"/><text x="1030.8" y="491.2" font-size="16.6" fill="#161513" textLength="31.2" lengthAdjust="spacing">New</text><rect x="1078.6" y="483.7" width="16.4" height="3" fill="#a16626"/><path d="M1081.2 480.59999999999997h11.2L1086.8 490.8z" fill="#a16626"/><text x="1106.0" y="491.2" font-size="16.6" fill="#161513" textLength="80.2" lengthAdjust="spacing">Suspended</text><rect x="1203.2" y="483.7" width="16.4" height="3" fill="#9e9a96"/><path d="M1211.4 479.4L1212.9 483.5L1217.3 483.7L1213.9 486.4L1215.0 490.6L1211.4 488.2L1207.8 490.6L1208.9 486.4L1205.5 483.7L1209.9 483.5z" fill="#9e9a96"/><text x="1231.0" y="491.2" font-size="16.6" fill="#161513" textLength="81.5" lengthAdjust="spacing">Terminated</text><path d="M2295.30 584.80A219.6 219.6 0 0 1 2504.15 736.54L2433.77 759.41A145.6 145.6 0 0 0 2295.30 658.80z" fill="#3e7c9d" stroke="#fbf9f8" stroke-width="2" stroke-linejoin="round"/><text x="2400.6" y="664.6" font-size="18.6" font-weight="400" fill="#fff" stroke="#fff" stroke-width="0.3" letter-spacing="0.3" text-anchor="middle" >20.0%</text><path d="M2504.15 736.54A219.6 219.6 0 0 1 2424.38 982.06L2380.88 922.19A145.6 145.6 0 0 0 2433.77 759.41z" fill="#c44732" stroke="#fbf9f8" stroke-width="2" stroke-linejoin="round"/><text x="2469.8" y="864.5" font-size="18.6" font-weight="400" fill="#fff" stroke="#fff" stroke-width="0.3" letter-spacing="0.3" text-anchor="middle" >20.0%</text><path d="M2424.38 982.06A219.6 219.6 0 0 1 2166.22 982.06L2209.72 922.19A145.6 145.6 0 0 0 2380.88 922.19z" fill="#5b8230" stroke="#fbf9f8" stroke-width="2" stroke-linejoin="round"/><text x="2295.6" y="988.3" font-size="18.6" font-weight="400" fill="#fff" stroke="#fff" stroke-width="0.3" letter-spacing="0.3" text-anchor="middle" >20.0%</text><path d="M2166.22 982.06A219.6 219.6 0 0 1 2086.45 736.54L2156.83 759.41A145.6 145.6 0 0 0 2209.72 922.19z" fill="#9b82c9" stroke="#fbf9f8" stroke-width="2" stroke-linejoin="round"/><text x="2121.0" y="864.5" font-size="18.6" font-weight="400" fill="#000" stroke="#000" stroke-width="0.3" letter-spacing="0.3" text-anchor="middle" >20.0%</text><path d="M2086.45 736.54A219.6 219.6 0 0 1 2295.30 584.80L2295.30 658.80A145.6 145.6 0 0 0 2156.83 759.41z" fill="#a16626" stroke="#fbf9f8" stroke-width="2" stroke-linejoin="round"/><text x="2190.6" y="664.6" font-size="18.6" font-weight="400" fill="#fff" stroke="#fff" stroke-width="0.3" letter-spacing="0.3" text-anchor="middle" >20.0%</text><text x="2295.3" y="813.0" font-size="19.4" font-weight="400" fill="#5c5955" stroke="#5c5955" stroke-width="0.3" letter-spacing="0.2" text-anchor="middle" >5 Apr</text><rect x="1967.0" y="477.2" width="16.2" height="15.8" fill="#3e7c9d"/><text x="1995.0" y="491.2" font-size="16.6" fill="#161513" textLength="77.6" lengthAdjust="spacing">Completed</text><rect x="2090.8" y="477.2" width="16.2" height="15.8" fill="#c44732"/><text x="2118.2" y="491.2" font-size="16.6" fill="#161513" textLength="52.8" lengthAdjust="spacing">Faulted</text><rect x="2187.9" y="477.2" width="16.2" height="15.8" fill="#5b8230"/><text x="2215.2" y="491.2" font-size="16.6" fill="#161513" textLength="80.3" lengthAdjust="spacing">In progress</text><rect x="2312.9" y="477.2" width="16.2" height="15.8" fill="#9b82c9"/><text x="2340.2" y="491.2" font-size="16.6" fill="#161513" textLength="31.8" lengthAdjust="spacing">New</text><rect x="2387.9" y="477.2" width="16.2" height="15.8" fill="#a16626"/><text x="2415.4" y="491.2" font-size="16.6" fill="#161513" textLength="80.8" lengthAdjust="spacing">Suspended</text><rect x="2512.9" y="477.2" width="16.2" height="15.8" fill="#9e9a96"/><text x="2540.8" y="491.2" font-size="16.6" fill="#161513" textLength="81.5" lengthAdjust="spacing">Terminated</text><rect x="1851.8" y="1494.46" width="943.0000000000002" height="1.5" fill="#e3e6ea"/><rect x="1851.8" y="1446.88" width="943.0000000000002" height="1.5" fill="#e3e6ea"/><rect x="1851.8" y="1399.29" width="943.0000000000002" height="1.5" fill="#e3e6ea"/><rect x="1851.8" y="1351.71" width="943.0000000000002" height="1.5" fill="#e3e6ea"/><rect x="1851.8" y="1304.12" width="943.0000000000002" height="1.5" fill="#e3e6ea"/><rect x="1851.8" y="1256.53" width="943.0000000000002" height="1.5" fill="#e3e6ea"/><rect x="1851.8" y="1208.95" width="943.0000000000002" height="1.5" fill="#e3e6ea"/><text x="1832.7" y="1547.3" font-size="18.2" font-weight="400" fill="#5c5955" stroke="#5c5955" stroke-width="0.3" letter-spacing="0.25" text-anchor="end" >0</text><text x="1832.7" y="1499.714" font-size="18.2" font-weight="400" fill="#5c5955" stroke="#5c5955" stroke-width="0.3" letter-spacing="0.25" text-anchor="end" >3</text><text x="1832.7" y="1452.128" font-size="18.2" font-weight="400" fill="#5c5955" stroke="#5c5955" stroke-width="0.3" letter-spacing="0.25" text-anchor="end" >6</text><text x="1832.7" y="1404.542" font-size="18.2" font-weight="400" fill="#5c5955" stroke="#5c5955" stroke-width="0.3" letter-spacing="0.25" text-anchor="end" >9</text><text x="1832.7" y="1356.956" font-size="18.2" font-weight="400" fill="#5c5955" stroke="#5c5955" stroke-width="0.3" letter-spacing="0.25" text-anchor="end" >12</text><text x="1832.7" y="1309.37" font-size="18.2" font-weight="400" fill="#5c5955" stroke="#5c5955" stroke-width="0.3" letter-spacing="0.25" text-anchor="end" >15</text><text x="1832.7" y="1261.7839999999999" font-size="18.2" font-weight="400" fill="#5c5955" stroke="#5c5955" stroke-width="0.3" letter-spacing="0.25" text-anchor="end" >18</text><text x="1832.7" y="1214.1979999999999" font-size="18.2" font-weight="400" fill="#5c5955" stroke="#5c5955" stroke-width="0.3" letter-spacing="0.25" text-anchor="end" >21</text><text transform="translate(1795.6 1375.8) rotate(-90)" font-size="16.4" fill="#5c5955" text-anchor="middle">Hours</text><rect x="1851.8" y="1542.05" width="943.0000000000002" height="1.5" fill="#a6a29e"/><rect x="2256.7" y="1246.0" width="133.8" height="296.8" fill="#335c63" fill-opacity="0.2"/><path d="M1851.8 1542.8H2121.2V1541.2H2256.7V1246.0H2390.6V1542.8H2794.8" fill="none" stroke="#335c63" stroke-width="3.1" stroke-linejoin="miter"/><circle cx="2323.3" cy="1245.6" r="7.9" fill="#fff" stroke="#5a5856" stroke-width="2.1"/><text x="1918.7" y="1577.0" font-size="19.2" font-weight="400" fill="#5c5955" stroke="#5c5955" stroke-width="0.3" letter-spacing="0.1" text-anchor="middle" >2 Apr</text><text x="2053.4" y="1577.0" font-size="19.2" font-weight="400" fill="#5c5955" stroke="#5c5955" stroke-width="0.3" letter-spacing="0.1" text-anchor="middle" >3 Apr</text><text x="2188.1" y="1577.0" font-size="19.2" font-weight="400" fill="#5c5955" stroke="#5c5955" stroke-width="0.3" letter-spacing="0.1" text-anchor="middle" >4 Apr</text><text x="2322.8" y="1577.0" font-size="19.2" font-weight="400" fill="#5c5955" stroke="#5c5955" stroke-width="0.3" letter-spacing="0.1" text-anchor="middle" >5 Apr</text><text x="2457.5" y="1577.0" font-size="19.2" font-weight="400" fill="#5c5955" stroke="#5c5955" stroke-width="0.3" letter-spacing="0.1" text-anchor="middle" >6 Apr</text><text x="2592.2" y="1577.0" font-size="19.2" font-weight="400" fill="#5c5955" stroke="#5c5955" stroke-width="0.3" letter-spacing="0.1" text-anchor="middle" >7 Apr</text><text x="2726.9" y="1577.0" font-size="19.2" font-weight="400" fill="#5c5955" stroke="#5c5955" stroke-width="0.3" letter-spacing="0.1" text-anchor="middle" >8 Apr</text><text x="1918.7" y="1602.2" font-size="19.2" font-weight="400" fill="#5c5955" stroke="#5c5955" stroke-width="0.3" letter-spacing="0.1" text-anchor="middle" >2023</text></svg>
<div style="position:absolute;left:2839.1px;top:1542.1px;width:101.9px;height:100px;background:linear-gradient(to top right, #a94836 0%, #b84e3a 45%, #ba503c 100%);"></div>
<svg style="position:absolute;left:2866px;top:1570px;width:50px;height:46px" viewBox="0 0 50 46"><path d="M7.2 3.8h34.2a4.2 4.2 0 0 1 4.2 4.2v21.5a4.2 4.2 0 0 1-4.2 4.2H17.2l-9.6 8.2c-1.6 1.2-4.6.6-4.6-1.8V8a4.2 4.2 0 0 1 4.2-4.2z" fill="#fdfcfc"/><g fill="#b84e3a"><circle cx="11.2" cy="18.7" r="4.2"/><circle cx="23.9" cy="18.7" r="4.2"/><circle cx="36.7" cy="18.7" r="4.2"/></g></svg>
<div style="position:absolute;left:140px;top:1656px;width:2735px;height:30px;box-shadow:0 0 54px 22px rgba(30,28,26,0.18);"></div></div></body></html>
